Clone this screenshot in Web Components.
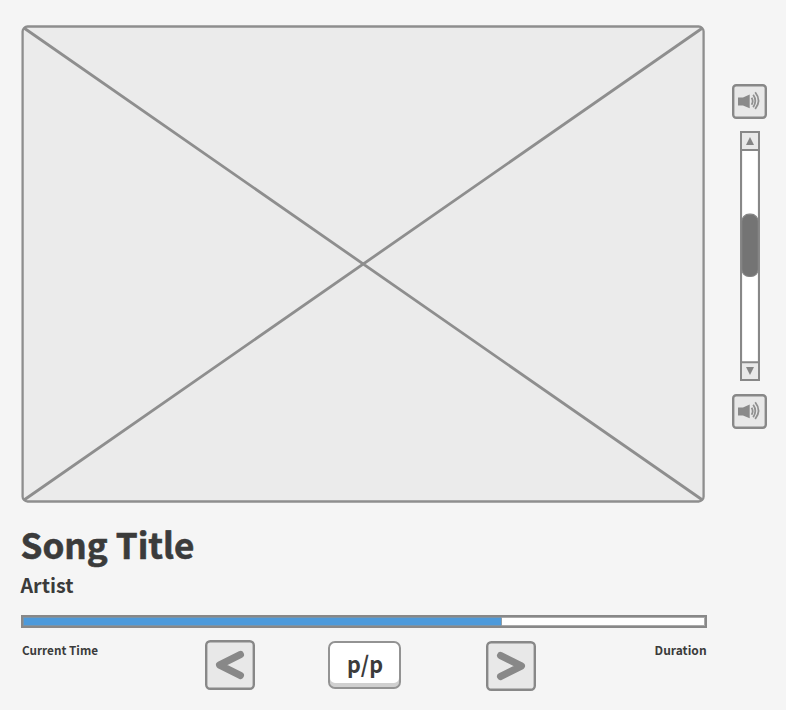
<!DOCTYPE html>
<html lang="en"><head><meta charset="utf-8"><title>Media player</title>
<style>html,body{margin:0;height:710px;overflow:hidden;background:#f5f5f5}</style></head>
<body><media-player></media-player>
<script>
const define=(name,html,setup)=>customElements.define(name,class extends HTMLElement{
  constructor(){super();this.attachShadow({mode:'open'}).innerHTML=html;}
  connectedCallback(){if(setup)setup(this,this.shadowRoot);}
});

// Text line with a fixed advance width; the baseline sits at the attribute "base".
define('text-line','<style>:host{display:block}svg{display:block;overflow:visible}text{font-family:"Noto Sans CJK SC","Noto Sans",sans-serif;font-weight:700;fill:#3b3b3b;stroke:#3b3b3b;stroke-width:var(--weight,0)}</style><svg><text lengthAdjust="spacingAndGlyphs"></text></svg>',(el,r)=>{
  const a=n=>el.getAttribute(n),s=r.querySelector('svg'),t=r.querySelector('text');
  s.setAttribute('width',a('width'));s.setAttribute('height',a('height'));
  t.setAttribute('x',a('x')||0);t.setAttribute('y',a('base'));t.setAttribute('textLength',a('width'));
  t.setAttribute('font-size',a('size'));t.textContent=a('label');
});

define('cover-art',`<style>:host{display:block;width:684px;height:478px}svg{display:block}</style>
<svg width="684" height="478" fill="none" stroke="#8e8e8e"><rect x="1.6" y="1.5" width="681" height="475" rx="5" fill="#ebebeb" stroke-width="2.3"/><path d="M3 3L681.5 475M681.5 3L3 475" stroke-width="2.8"/></svg>`);

define('speaker-button',`<style>:host{display:block;width:35px;height:35px}svg{display:block}</style>
<svg width="35" height="35"><rect x="1.2" y="1.2" width="32.6" height="32.6" rx="3" fill="#e8e8e8" stroke="#888" stroke-width="2.4"/>
<path d="M6 13.5H11L17.7 10.5V24.3L11 21.5H6Z" fill="#8a8a8a"/>
<path d="M19.6 13.8Q21.8 17.2 19.6 20.8M21.2 10.8Q25.4 16.8 21.2 23.2M23.2 8.2Q29.8 16.5 23.2 25" fill="none" stroke="#909090" stroke-width="1.8"/></svg>`);

define('volume-slider',`<style>:host{display:block;width:20px;height:250px}svg{display:block}</style>
<svg width="20" height="250"><rect x="1" y="1" width="18" height="248" fill="#fff" stroke="#888" stroke-width="2.2"/>
<path d="M2 2H18V18H2ZM2 232H18V248H2Z" fill="#e9e9e9"/><path d="M1 19H19M1 231.3H19" stroke="#888" stroke-width="2"/>
<path d="M10 6L14 14H6ZM6 236H14L10 244Z" fill="#858585"/>
<rect x="1.7" y="83.2" width="16.6" height="62.3" rx="7.5" fill="#747474" stroke="#858585" stroke-width="1.2"/></svg>`);

define('song-progress',`<style>:host{display:flex;box-sizing:border-box;width:686px;height:13px;border:2px solid #888;background:#fff;box-shadow:inset 0 0 0 1px #aaa}
i{box-sizing:border-box;width:478px;height:9px;background:#4d9adb;border:solid #7894aa;border-width:1px 0 1px 1px;box-shadow:1px 0 #8f9ca5}</style><i></i>`);

define('skip-button',`<style>:host{display:block;width:50px;height:50px}:host([forward]) path{transform:translate(50px,0) scaleX(-1)}svg{display:block}</style>
<svg width="50" height="50"><rect x="1.2" y="1.2" width="47.6" height="47.6" rx="4" fill="#e8e8e8" stroke="#888" stroke-width="2.4"/><path d="M35.5 14.5L14.5 25L35.5 35.5" fill="none" stroke="#888" stroke-width="7" stroke-linecap="round" stroke-linejoin="round"/></svg>`);

define('play-button',`<style>:host{display:flex;justify-content:center;box-sizing:border-box;width:73px;height:48px;border:2.8px solid #939393;border-radius:7px;background:#fff;box-shadow:inset 0 -4px #d0d0d0;padding-top:3px}</style><slot></slot>`);

define('media-player',`<style>
:host{display:flex;flex-direction:column;box-sizing:border-box;width:785px;height:710px;padding:25px 18px 0 21px;background:#f5f5f5}
.stage{display:flex;justify-content:space-between;height:478px}
.volume{display:flex;flex-direction:column;align-items:center;padding-top:59px;gap:12px}
.volume volume-slider{margin-bottom:1px}
.title{margin-top:24px;height:48px;--weight:.6px}.artist{height:24px;margin-top:1px}.bar{margin:15px 0 0}
.controls{display:flex;margin-top:12px}.time{margin:1px 107px 0 1px}.next{margin:1px 118px 0 85px}.play{margin:1px 0 0 73px}.end{margin-top:1px}
</style>
<div class="stage"><cover-art></cover-art><div class="volume"><speaker-button></speaker-button><volume-slider></volume-slider><speaker-button></speaker-button></div></div>
<text-line class="title" label="Song Title" x="-.5" width="174" height="48" base="32" size="35"></text-line>
<text-line class="artist" label="Artist" x="-.5" width="53" height="24" base="17" size="19.5"></text-line>
<song-progress class="bar"></song-progress>
<div class="controls"><text-line class="time" label="Current Time" width="76" height="20" base="14" size="12"></text-line>
<skip-button></skip-button><play-button class="play"><text-line label="p/p" width="36" height="36" base="27" size="22.5"></text-line></play-button>
<skip-button class="next" forward></skip-button><text-line class="end" label="Duration" x=".6" width="52" height="20" base="14" size="12"></text-line></div>`);
</script></body></html>
